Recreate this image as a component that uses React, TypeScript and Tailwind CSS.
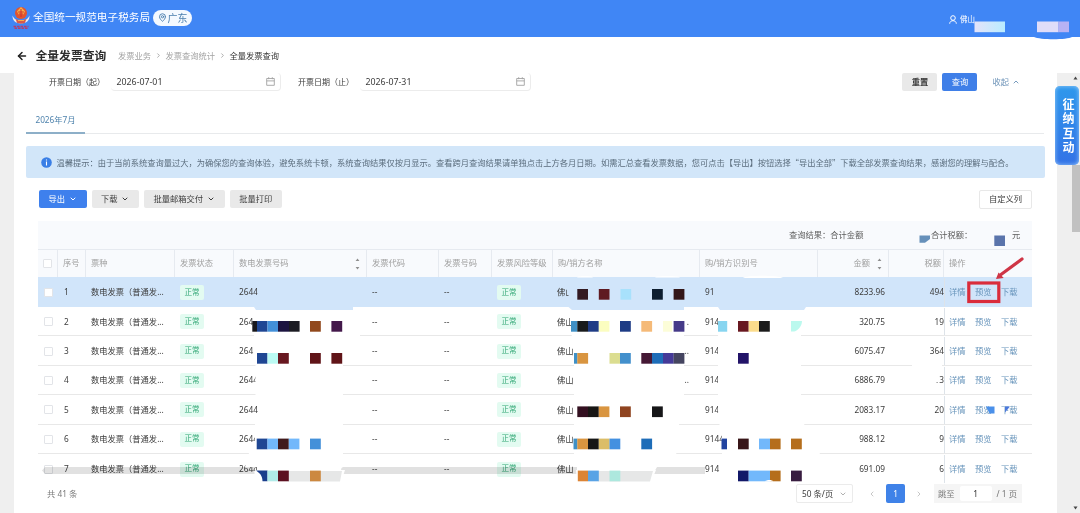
import type { ReactNode } from "react";
import clsx from "clsx";
import { ArrowLeft, ChevronDown, ChevronLeft, ChevronRight, ChevronUp, MapPin } from "lucide-react";

const NOTICE =
  "温馨提示：由于当前系统查询量过大，为确保您的查询体验，避免系统卡顿，系统查询结果仅按月显示。查看跨月查询结果请单独点击上方各月日期。如需汇总查看发票数据，您可点击【导出】按钮选择“导出全部”下载全部发票查询结果，感谢您的理解与配合。";

const COLS =
  "grid grid-cols-[20px_28px_89px_59px_133px_72px_53px_61px_147px_118px_71px_55px_88px]";

const rows = [
  { code: "2644", id: "91", more: "", amount: "8233.96", tax: "494" },
  { code: "264", id: "914", more: ".", amount: "320.75", tax: "19" },
  { code: "264", id: "914", more: "..", amount: "6075.47", tax: "364" },
  { code: "2644", id: "914", more: "..", amount: "6886.79", tax: "13" },
  { code: "2644", id: "914", more: "", amount: "2083.17", tax: "20" },
  { code: "2644", id: "9144", more: "", amount: "988.12", tax: "9" },
  { code: "2644", id: "914", more: "", amount: "691.09", tax: "6" },
];

// [x, y, width, colour]
const tiles: [number, number, number, string][] = [
  [577.3, 289, 10.7, "#331a22"], [598.8, 289, 10.7, "#5f1a22"], [620.5, 289, 10.7, "#a8e1fc"], [652, 289, 10.8, "#0d1e30"], [673.6, 289, 10.8, "#331618"],

  [252.3, 321, 4.7, "#17171c"], [257, 321, 10.5, "#1f4693"], [267.5, 321, 10.6, "#4390d9"], [278, 321, 11, "#1c1440"], [289, 321, 10.6, "#1b1b22"], [310, 321, 10.8, "#91481c"], [331.4, 321, 10.8, "#43184a"],
  [571, 321, 6.4, "#4090c5"], [577.3, 321, 10.8, "#181a1c"], [588, 321, 10.8, "#1f3c85"], [598.8, 321, 10.6, "#fbfdc0"], [620, 321, 10.8, "#1d3b85"], [641.3, 321, 10.8, "#f5ba78"], [663, 321, 9, "#fcfdd8"], [673.6, 321, 10.8, "#453a88"],
  [718, 321, 9.2, "#87d5f0"], [738, 321, 10.7, "#681820"], [748.7, 321, 10.5, "#fbdc8c"], [759, 321, 10.8, "#1a1a1a"],

  [257, 353, 10.5, "#1f4693"], [267.5, 353, 10.5, "#bbfaf3"], [278, 353, 10.8, "#681820"], [310, 353, 10.8, "#601418"], [331.4, 353, 10.8, "#601418"],
  [574, 353, 3.4, "#4090c5"], [577.3, 353, 10.8, "#d99540"], [609.5, 353, 10.6, "#dbdd90"], [620, 353, 10.8, "#4390cc"], [641.3, 353, 10.8, "#451835"], [652, 353, 11, "#1e6db8"], [663, 353, 10.7, "#453a98"], [673.6, 353, 10.8, "#454560"],
  [738, 353, 10.7, "#221368"],

  [577.3, 406.4, 10.8, "#331020"], [588, 406.4, 10.8, "#181614"], [598.8, 406.4, 10.6, "#d99540"], [620, 406.4, 10.8, "#8f4420"], [652, 406.4, 10.8, "#161618"],

  [256.7, 438.6, 10.8, "#1f4693"], [267.4, 438.6, 10.6, "#72b8fb"], [278, 438.6, 10.8, "#401a1c"], [288.8, 438.6, 10.6, "#72b8fb"], [310, 438.6, 10.8, "#4390d9"],
  [573.5, 438.6, 3.9, "#4090c5"], [577.3, 438.6, 10.8, "#d99540"], [588, 438.6, 10.8, "#161616"], [598.8, 438.6, 10.8, "#dbbd68"], [609.5, 438.6, 10.8, "#4390e0"], [641.3, 438.6, 10.8, "#1e6db8"],
  [721.5, 438.6, 5.5, "#2244a0"], [738, 438.6, 10.7, "#381518"], [759, 438.6, 11, "#72b8fb"], [770, 438.6, 10.6, "#b56e1c"], [791, 438.6, 10.8, "#b56e1c"],

  [267.5, 470.6, 10.5, "#b0eae8"], [278, 470.6, 10.8, "#5c1020"], [310, 470.6, 10.8, "#cc8840"],
  [577.8, 470.6, 10.2, "#dc8435"], [588, 470.6, 10.8, "#59a3e5"], [609.5, 470.6, 10.8, "#ade8de"],
  [738, 470.6, 10.7, "#121868"], [748.7, 470.6, 21.3, "#72b8fb"], [770, 470.6, 10.6, "#b56e1c"], [791, 470.6, 10.8, "#381d40"],
];

function Sorter() {
  return (
    <svg width="5" height="12" viewBox="0 0 5 12" fill="#8e8e8e" aria-hidden="true">
      <path d="M2.5 0.5 4.4 3H.6zM2.5 11.5.6 9h3.8z" />
    </svg>
  );
}

function Calendar() {
  return (
    <svg width="9" height="9" viewBox="0 0 9 9" fill="none" stroke="#a3a3a3" strokeWidth="0.9" aria-hidden="true">
      <path d="M.7 1.5h7.6v6.8H.7zM.7 3.9h7.6M2.7.2v2M6.3.2v2" />
    </svg>
  );
}

function DateField({ label, value, wide }: { label: string; value: string; wide?: boolean }) {
  return (
    <div className="flex items-center">
      <span className="w-[62px] whitespace-nowrap text-[8px]">{label}</span>
      <div
        className={clsx(
          "flex h-[18px] items-center justify-between rounded-sm border-r border-b border-[#ececec] pr-[5px] pl-[5.5px]",
          wide ? "w-[171px]" : "w-[170px]",
        )}
      >
        <span className="pt-[2px] text-[8.8px]">{value}</span>
        <Calendar />
      </div>
    </div>
  );
}

function GrayButton({ children, className }: { children: ReactNode; className: string }) {
  return (
    <button className={clsx("flex h-[18px] items-center justify-center gap-1 rounded-xs bg-[#e9e9e9]", className)}>
      {children}
    </button>
  );
}

function HeadCell({ children, className }: { children?: ReactNode; className?: string }) {
  return (
    <div className={clsx("flex items-center overflow-hidden whitespace-nowrap border-r border-[#e6eaf0] pl-[5px]", className)}>
      {children}
    </div>
  );
}

function Status() {
  return (
    <span className="flex h-[15px] w-[24px] items-center justify-center rounded-xs bg-[#e3fbf1] text-[7.6px] text-[#35a877]">
      正常
    </span>
  );
}

function Checkbox() {
  return <span className="block h-[9px] w-[9px] rounded-[1px] border border-[#e2e4e8] bg-white" />;
}

function Emblem() {
  return (
    <svg width="18" height="24" viewBox="0 0 18 24" aria-hidden="true">
      <circle cx="9" cy="7" r="6" fill="#e2542f" />
      <path d="M5 5.2 9 1l4 4.2-1.5 3.3h-5z" fill="#f6b04a" />
      <path d="M6.2 6h5.6M6.8 8h4.4M9 3v8" stroke="#d02f28" strokeWidth="1" />
      <path d="M.6 9.5c1.2 3.6 4.2 5 8.4 5s7.2-1.4 8.4-5c.6 4.4-2.8 8-8.4 8S0 13.900.6 9.5z" fill="#f3ece8" />
      <path d="M3.5 12.8c2 1.6 9 1.6 11 0l-1.500 4c-2 1.2-6 1.2-8 0z" fill="#d8584a" />
      <path d="M6 14.5h6" stroke="#f6b04a" strokeWidth="1" />
      <path d="M1.5 20.5h15M2.5 22.2h13" stroke="#b03f70" strokeWidth="1.4" strokeDasharray="2.6 .9" />
    </svg>
  );
}

/* Masks that hide the private parts of the result list */
function Redactions() {
  return (
    <svg className="pointer-events-none absolute inset-0" width="1080" height="513" viewBox="0 0 1080 513" aria-hidden="true">
      <path d="M1034 37h38c-5 3-32 3-38 0z" fill="#4086f5" />
      <linearGradient id="mask">
        <stop offset="0" stopColor="#e4e3fa" />
        <stop offset="1" stopColor="#b9ecff" />
      </linearGradient>
      <rect x="974.5" y="21.5" width="30.5" height="10.7" fill="url(#mask)" />
      <rect x="1037" y="21.5" width="21.5" height="10.7" fill="#e0ddf9" />
      <rect x="1058.3" y="21.5" width="10.7" height="10.7" fill="#b7b2f4" />

      <path d="M919.5 235.5h10.5v3.5l-5 3.8h-5.5z" fill="#6690ba" />
      <rect x="994.3" y="235.5" width="10.7" height="10.5" fill="#5a74ab" />

      <g fill="#d1e5fa">
        <path d="M257.5 284h95.5v26h-97l-2-3h3.5z" />
        <path d="M568.5 284h115.5v26h-112l-3.5-3z" />
        <path d="M716 284h90v23l-2 3h-84l-2-3h-2z" />
      </g>
      <path d="M577 277.5c1-2 15-2 16 0zM655 277.5c1-2 24-2 25 0zM743 278c2-3 36-3 40 0z" fill="#fff" />
      <g fill="#fff">
        <path d="M254 310h106v30h-17v127h-98l4-14 6-8V418h3V396h-2.500V352h-1.500z" />
        <path d="M571 310h114v10h-1v75l-5 30-4 42H574V340l-3-6z" />
        <path d="M718 310h83v114h3l16 30v13H722v-38h-2l-2-18z" />
        <path d="M912 364h30v9h-30zM934 374h4v8H934z" />
      </g>

      {/* horizontal scroll bar */}
      <g fill="#e1e1e1" style={{ mixBlendMode: "multiply" }}>
        <path d="M42 470.5l3-3.5h209.5v7H45z" />
        <path d="M343 467h234v7H340l1.5-6zM657 467h48v7h-52z" />
      </g>
      <path d="M255 470h90l-4 12h-82zM576 470h80l-5 12h-74z" fill="#fff" />
      <path d="M288 471h54l-2 10.500h-52zM598 471h55l-3 10.500h-52z" fill="#e6e7e7" />
      <path d="M256 470.6h11.5v10.7h-5c0-6-3-8-6.5-10.7z" fill="#1a3d8c" />
      <path d="M791 321h11c0 6-5 10-8 10.500h-3z" fill="#bbf9ee" />
      {tiles.map(([x, y, w, fill], i) => (
        <rect key={i} x={x} y={y} width={w} height="10.7" fill={fill} />
      ))}
      <path d="M765 481.5c1-2 8-2 8 0z" fill="#fff" />
      <path d="M986 406.5h8.5v7h-5z" fill="#4a90ea" />
      <path d="M1005 406.5h5l-5 6z" fill="#4a78dc" />

      {/* pointer to the preview link */}
      <rect x="968.8" y="283" width="30" height="18.500" fill="none" stroke="#da2c3b" strokeWidth="3.2" />
      <path d="M1022 259 1001 274.5" stroke="#cf3546" strokeWidth="3.2" strokeLinecap="round" />
      <path d="M996 279l2.500-6.500 5.200 5.500z" fill="#cf3546" />
    </svg>
  );
}

export default function App() {
  return (
    <div className="relative flex h-[513px] w-[1080px] flex-col overflow-hidden bg-white font-['Noto_Sans','Noto_Sans_CJK_SC',sans-serif] text-[8.27px] leading-none text-[#3c3c3c]">
      <header className="flex h-[37px] shrink-0 items-center bg-[#4086f5] pb-[2px] pl-[12px] text-white">
        <Emblem />
        <span className="ml-[3px] text-[10.65px]">全国统一规范电子税务局</span>
        <span className="ml-[3px] flex h-[16px] w-[39px] items-center justify-center gap-px rounded-full bg-[#f4f9ff] text-[10px] text-[#4b7fae]">
          <MapPin size={9} strokeWidth={2.5} />
          广东
        </span>
        <div className="ml-[757px] flex items-center gap-[3px] pt-[4px]">
          <svg width="8" height="9" viewBox="0 0 8 9" fill="none" stroke="currentColor" strokeWidth="1" aria-hidden="true">
            <circle cx="4" cy="3" r="2.3" />
            <path d="M.7 8.7c0-4 6.6-4 6.6 0" />
          </svg>
          <span className="text-[7.5px]">佛山</span>
        </div>
      </header>

      <div className="flex h-[36px] shrink-0 items-center pl-[16px] pt-[2px]">
        <ArrowLeft size={12} strokeWidth={3} className="text-[#222]" />
        <h1 className="ml-[7.5px] w-[82.5px] text-[11.8px] font-bold text-[#2c2c2c]">全量发票查询</h1>
        <nav className="flex items-center gap-[3.7px] text-[#a3a3a3]">
          <span>发票业务</span>
          <ChevronRight size={7} strokeWidth={3} />
          <span>发票查询统计</span>
          <ChevronRight size={7} strokeWidth={3} />
          <span className="text-[#333]">全量发票查询</span>
        </nav>
      </div>

      <div className="flex min-h-0 flex-1">
        <aside className="w-[14px] shrink-0 bg-[#efefef]" />

        <main className="flex w-[1043px] shrink-0 flex-col">
          <div className="flex h-[18px] items-center pl-[35px]">
            <DateField label="开票日期（起）" value="2026-07-01" />
            <div className="w-[17px]" />
            <DateField label="开票日期（止）" value="2026-07-31" wide />
            <div className="ml-auto flex items-center pr-[37px]">
              <GrayButton className="w-[35px] font-bold">重置</GrayButton>
              <button className="ml-[5px] h-[18px] w-[35px] rounded-xs bg-[#3f7fe8] text-white">查询</button>
              <span className="ml-[15px] flex items-center gap-[3px] text-[#6d93b8]">
                收起
                <ChevronUp size={8} strokeWidth={2.8} />
              </span>
            </div>
          </div>

          <div className="ml-[12px] mt-[17px] flex h-[26px] w-[1018px] border-b border-[#e8eaec]">
            <div className="flex h-[26px] w-[59px] items-center justify-center border-b-2 border-[#8dafc8] pt-px text-[#4f83ad]">
              2026年7月
            </div>
          </div>

          <div className="ml-[12px] mt-[12px] flex h-[32px] w-[1019px] items-center gap-[5px] rounded-xs bg-[#d2e6f9] pl-[14.5px]">
            <svg width="11" height="11" viewBox="0 0 11 11" aria-hidden="true">
              <circle cx="5.5" cy="5.5" r="5.3" fill="#3a7fe6" />
              <path d="M5.5 4.6v3.8M5.5 2.4v1.2" stroke="#fff" strokeWidth="1.1" />
            </svg>
            <p className="whitespace-nowrap font-['Noto_Sans_CJK_SC',sans-serif] text-[8.25px] text-[#5b6d7d]">{NOTICE}</p>
          </div>

          <div className="ml-[24px] mt-[12px] flex h-[18px] w-[994px] items-center gap-[5px] pl-[0.7px]">
            <button className="flex h-[18px] w-[48px] items-center justify-center gap-1 rounded-xs bg-[#3e80ed] text-white">
              导出
              <ChevronDown size={8} strokeWidth={3} />
            </button>
            <GrayButton className="w-[47px]">
              下载
              <ChevronDown size={8} strokeWidth={3} />
            </GrayButton>
            <GrayButton className="w-[81px]">
              批量邮箱交付
              <ChevronDown size={8} strokeWidth={3} />
            </GrayButton>
            <GrayButton className="w-[52px]">批量打印</GrayButton>
            <button className="ml-auto h-[19px] w-[53px] rounded-xs border border-[#e8e8e8]">自定义列</button>
          </div>

          <section className="ml-[24px] mt-[13px] w-[994px]">
            <div className="flex h-[28px] items-center bg-[#f8fafd] text-[#5c5c5c]">
              <span className="ml-[751px] w-[142px]">查询结果：合计金额</span>
              <span className="w-[81px]">合计税额：</span>
              <span>元</span>
            </div>
            <div className={clsx(COLS, "h-[28px] border-t border-[#e6eaf0] bg-[#f8fafd] text-[#a0a0a0]")}>
              <HeadCell>
                <Checkbox />
              </HeadCell>
              <HeadCell>序号</HeadCell>
              <HeadCell>票种</HeadCell>
              <HeadCell>发票状态</HeadCell>
              <HeadCell className="justify-between pr-[6px]">
                数电发票号码
                <Sorter />
              </HeadCell>
              <HeadCell>发票代码</HeadCell>
              <HeadCell>发票号码</HeadCell>
              <HeadCell>发票风险等级</HeadCell>
              <HeadCell>购/销方名称</HeadCell>
              <HeadCell>购/销方识别号</HeadCell>
              <HeadCell className="justify-end gap-[7px] pr-[6px]">
                金额
                <Sorter />
              </HeadCell>
              <HeadCell className="justify-end pr-[2px]">税额</HeadCell>
              <HeadCell className="border-r-0">操作</HeadCell>
            </div>

            {rows.map((row, i) => (
              <div
                key={i}
                className={clsx(
                  COLS,
                  "items-center",
                  i === 0 ? "h-[30px] bg-[#d1e5fa] pt-px" : "h-[29.4px] pt-px",
                  i > 0 && i < 6 && "border-b border-[#e8e8e8]",
                )}
              >
                <div className="pl-[6px]">
                  <Checkbox />
                </div>
                <div className="pl-[6px]">{i + 1}</div>
                <div className="whitespace-nowrap pl-[5px]">数电发票（普通发...</div>
                <div className="pl-[5px]">
                  <Status />
                </div>
                <div className="pl-[5px]">{row.code}</div>
                <div className="pl-[5px]">--</div>
                <div className="pl-[5px]">--</div>
                <div className="pl-[5px]">
                  <Status />
                </div>
                <div className="flex justify-between pl-[4px] pr-[11px]">
                  <span>佛山</span>
                  <span>{row.more}</span>
                </div>
                <div className="pl-[5px]">{row.id}</div>
                <div className="pr-[4px] text-right">{row.amount}</div>
                <div className="text-right">{row.tax}</div>
                <div className="flex h-full items-center gap-[9.5px] border-l border-[#dde3e9] pl-[4px] text-[#6794bb]">
                  <span>详情</span>
                  <span>预览</span>
                  <span>下载</span>
                </div>
              </div>
            ))}
          </section>

          <footer className="ml-[33px] mt-px flex h-[19px] shrink-0 items-center">
            <span className="w-[749px] text-[#7a7a7a]">共 41 条</span>
            <div className="flex h-[19px] w-[57px] items-center justify-between rounded-xs border border-[#ebebeb] px-[5px]">
              50 条/页
              <ChevronDown size={8} className="text-[#888]" />
            </div>
            <ChevronLeft size={8} className="ml-[15px] text-[#aaa]" />
            <span className="ml-[10px] flex h-[19px] w-[19px] items-center justify-center rounded-xs bg-[#3f82e8] text-white">1</span>
            <ChevronRight size={8} className="ml-[10px] text-[#aaa]" />
            <div className="ml-[11px] flex h-[19px] w-[88px] items-center bg-[#f5f5f5] pl-[4px] text-[#777]">
              跳至
              <span className="mx-[5px] flex h-[15px] w-[32px] items-center justify-center rounded-xs bg-white text-[#333]">1</span>
              / 1 页
            </div>
          </footer>
        </main>

        <aside className="flex flex-1 flex-col items-end bg-[#efefef]">
          <svg className="mr-[2px] mt-[3px] shrink-0" width="5" height="4" viewBox="0 0 5 4" aria-hidden="true">
            <path d="M2.5.5 4.5 3.5h-4z" fill="#444" />
          </svg>
          <div className="-ml-[2px] mt-[6px] flex h-[79px] w-[24px] shrink-0 items-center justify-center self-start rounded-[5px] bg-linear-to-b from-[#2f98ec] to-[#3372e6] pt-[3px] text-[12px] font-bold text-white inset-shadow-[0_0_4px_#9accfa]">
            <span className="tracking-[2.5px] [writing-mode:vertical-rl]">征纳互动</span>
          </div>
          <div className="h-[67px] w-[8px] shrink-0 bg-[#c1c1c1]" />
          <svg className="mb-[3px] mr-[2px] mt-auto shrink-0" width="5" height="4" viewBox="0 0 5 4" aria-hidden="true">
            <path d="M2.5 3.5.5.5h4z" fill="#444" />
          </svg>
        </aside>
      </div>

      <Redactions />
    </div>
  );
}
